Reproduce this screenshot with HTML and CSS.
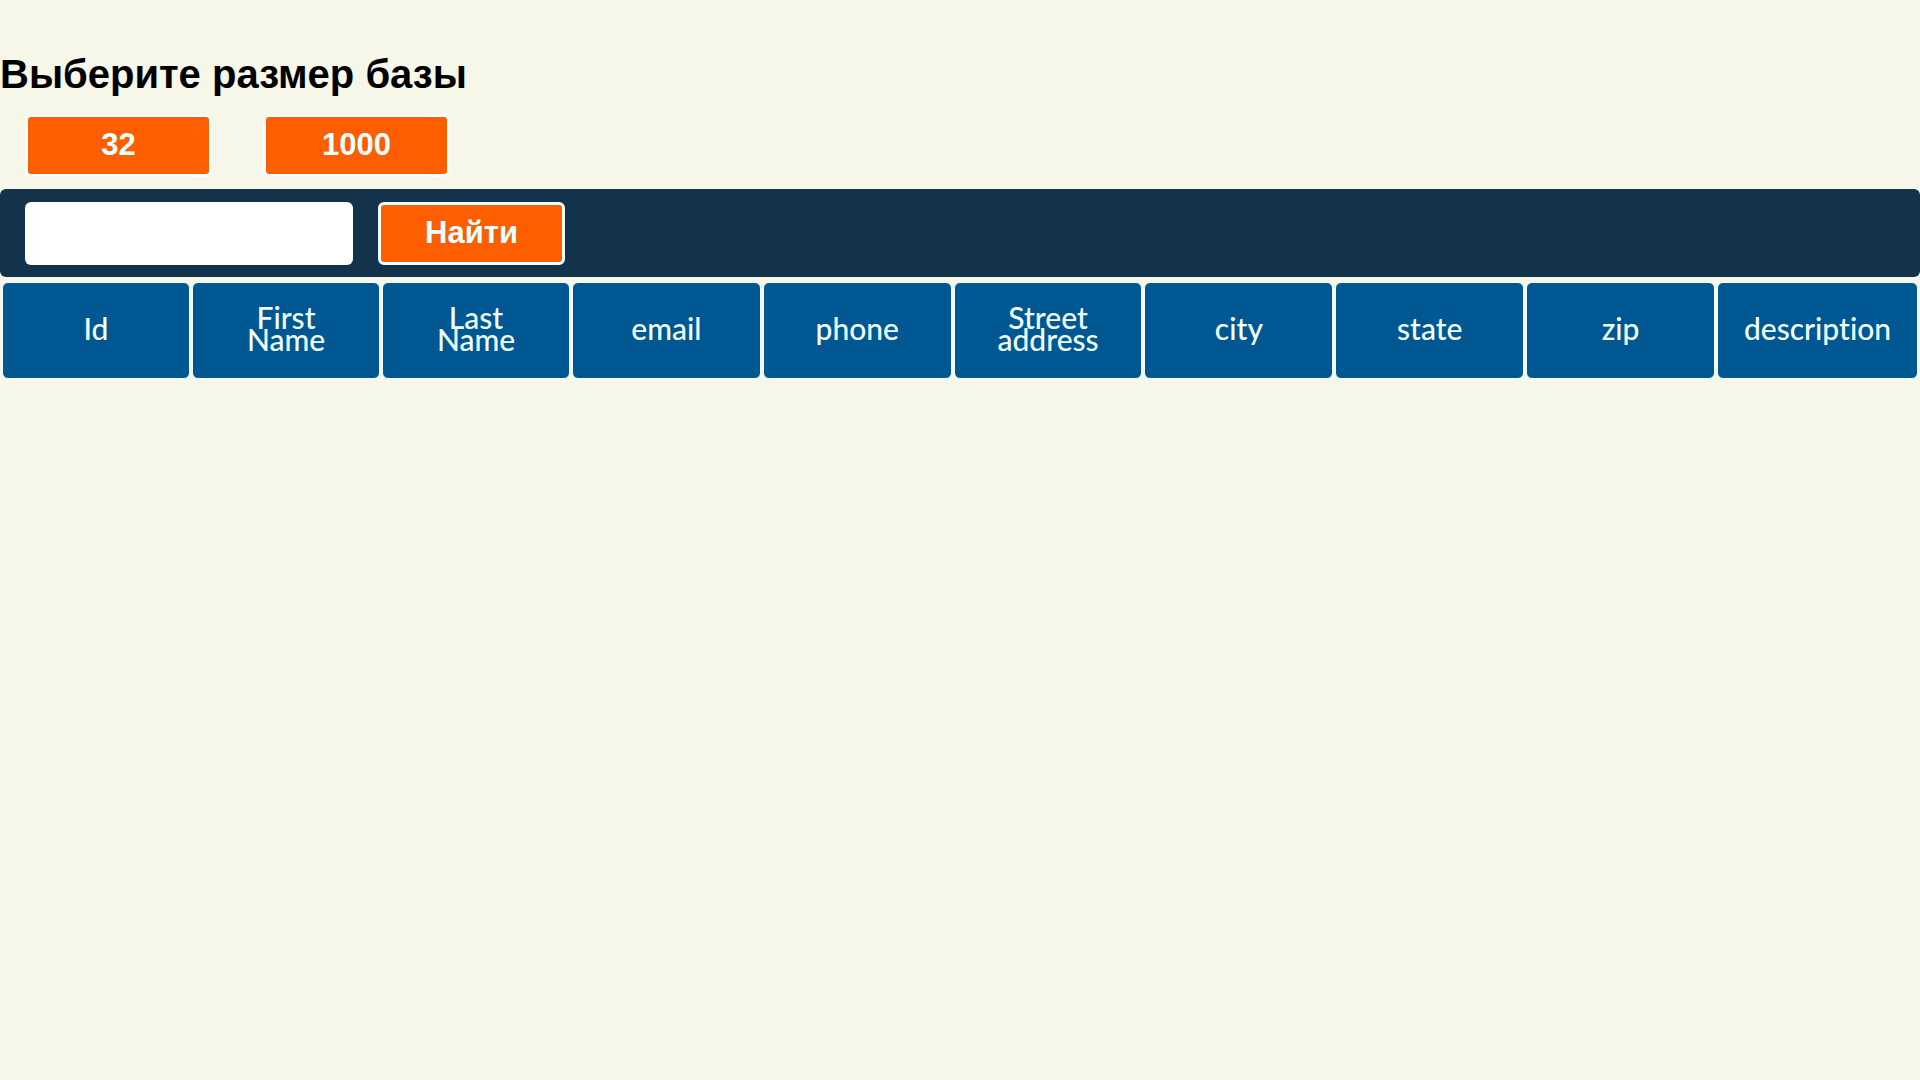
FILE: index.html
```
<!DOCTYPE html>
<html lang="ru">
<head>
<meta charset="utf-8">
<title>Таблица пользователей</title>
<link rel="stylesheet" href="styles.css">
</head>
<body>
<main>
  <section class="size">
    <h1 class="size-title">Выберите размер базы</h1>
    <div class="size-options">
      <button class="button" type="button">32</button>
      <button class="button" type="button">1000</button>
    </div>
  </section>
  <form class="search">
    <input class="search-input" type="text" aria-label="Поиск">
    <button class="button" type="button">Найти</button>
  </form>
  <table class="users">
    <thead>
      <tr>
        <th class="narrow">Id</th>
        <th class="narrow">First Name</th>
        <th class="narrow">Last Name</th>
        <th>email</th>
        <th>phone</th>
        <th>Street address</th>
        <th>city</th>
        <th>state</th>
        <th>zip</th>
        <th class="wide">description</th>
      </tr>
    </thead>
  </table>
</main>
</body>
</html>
```
FILE: styles.css
```
* {
  box-sizing: border-box;
}

body {
  margin: 0;
  background: #f6f6e9;
  font-family: "Liberation Sans", Arial, sans-serif;
}

.size {
  padding-top: 50px;
}

.size-title {
  margin: 0;
  font-size: 40px;
  line-height: 48px;
}

.size-options {
  display: flex;
  gap: 51px;
  padding: 16px 25px 12px;
}

.button {
  width: 187px;
  height: 63px;
  padding: 0 0 2px;
  border: 3px solid #f0ffff;
  border-radius: 6px;
  background: #fd5f00;
  color: #f0ffff;
  font: bold 31px/30px "Liberation Sans", Arial, sans-serif;
  cursor: pointer;
}

.search {
  display: flex;
  gap: 25px;
  padding: 13px 25px 12px;
  border-radius: 6px;
  background: #13334c;
}

.search-input {
  width: 328px;
  height: 63px;
  padding: 0 12px;
  border: 0;
  border-radius: 6px;
  background: #fff;
  font-size: 30px;
}

.users {
  width: 100%;
  margin-top: 3px;
  border-collapse: separate;
  border-spacing: 2px;
  table-layout: fixed;
}

.users th {
  height: 97px;
  padding: 0 40px 6px;
  border: 1px solid #f0ffff;
  border-radius: 6px;
  background: #005792;
  color: #f0ffff;
  font: 500 30px/22px Lato, sans-serif;
  font-variant-ligatures: none;
}

.users .narrow {
  width: 188px;
}

.users .wide {
  width: 201px;
  padding: 0 0 6px;
}
```
